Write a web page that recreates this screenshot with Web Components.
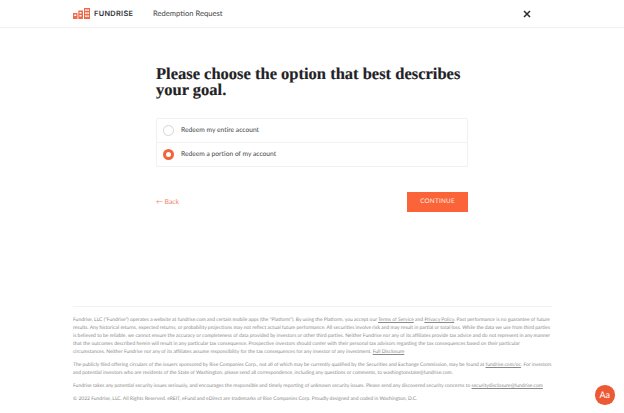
<!DOCTYPE html>
<html lang="en"><head><meta charset="utf-8"><title>Redemption Request</title>
<style>
html,body{margin:0;padding:0;background:#fff;}
body{font-family:"Lato","Noto Sans",sans-serif;color:#333;width:624px;height:413px;overflow:hidden;position:relative;text-rendering:geometricPrecision;}
</style></head>
<body>
<fr-header title-text="Redemption Request"></fr-header>
<fr-question>
  <span slot="title">Please choose the option that best describes your goal.</span>
  <fr-option>Redeem my entire account</fr-option>
  <fr-option checked>Redeem a portion of my account</fr-option>
</fr-question>
<fr-footer></fr-footer>
<fr-bubble></fr-bubble>
<script>
function def(name,html,init){customElements.define(name,class extends HTMLElement{constructor(){super();const r=this.attachShadow({mode:'open'});r.innerHTML=html;if(init)init(this,r);}});}
def('fr-header',`<style>
:host{display:flex;align-items:center;height:27px;border-bottom:1px solid #f1f1f1;padding-left:73px;box-sizing:content-box;}
svg{display:block}
.brand{font:600 7.400px/1 "Inter","Liberation Sans",sans-serif;letter-spacing:.3px;color:#2f3439;margin-left:4px;width:56px}
.t{font:400 7.600px/1 "Lato",sans-serif;color:#444;margin-left:3px;padding-top:1px}
.x{margin-left:auto;margin-right:93px;margin-top:1px}
</style>
<svg width="17" height="11" viewBox="0 0 17 11"><g fill="#ef6a4a"><path fill-rule="evenodd" d="M0 5h4.500v6H0zM1.200 6.500v1.400h2V6.500z"/><path fill-rule="evenodd" d="M5.300 2.500h4.700V11H5.300zM6.500 4v1.400h2V4zM6.500 7v1.400h2V7z"/><path fill-rule="evenodd" d="M11 0H17V11H11zM12.200 1.300v1.600h1.500V1.300zM14.400 1.300v1.600h1.400V1.300zM12.200 4.300v1.600h1.500V4.300zM14.400 4.300v1.600h1.400V4.300zM12.200 7.300v1.600h1.500V7.300zM14.400 7.300v1.600h1.400V7.300z"/></g></svg>
<span class="brand">FUNDRISE</span><span class="t">Redemption Request</span>
<svg class="x" width="8" height="8" viewBox="0 0 8 8"><path d="M1 1l6 6M7 1L1 7" stroke="#2b2b2b" stroke-width="1.500" fill="none"/></svg>`);
def('fr-question',`<style>
:host{display:block;width:312px;margin:0 auto 0 156px;padding-top:38px;}
h1{margin:0;font:700 16.500px/16px "Liberation Serif",serif;color:#1f2326;width:312px;-webkit-text-stroke:.15px #1f2326}
.card{margin-top:20px;border:1px solid #f0f0f0;border-radius:2px;}
.nav{display:flex;justify-content:space-between;align-items:center;margin-top:25px}
a{font:400 6.800px/1 "Lato",sans-serif;color:#ef8468;}
button{all:unset;width:61px;height:20px;background:#fb6338;color:#fde3da;font:500 6.300px/20px "Lato",sans-serif;letter-spacing:.25px;text-align:center;}
</style>
<h1><slot name="title"></slot></h1>
<div class="card"><slot></slot></div>
<div class="nav"><a>← Back</a><button>CONTINUE</button></div>`);
def('fr-option',`<style>
:host{display:flex;align-items:center;height:23px;font:400 6.700px/1 "Lato",sans-serif;color:#444;padding-left:6px;}
:host(:not(:last-child)){border-bottom:1px solid #f2f2f2;}
i{display:block;width:11px;height:11px;box-sizing:border-box;border-radius:50%;border:1px solid #d5d5d5;margin-right:7px;background:#fff;flex:none}
:host([checked]) i{border:3.500px solid #f2643a;}
</style><i></i><span><slot></slot></span>`);
def('fr-footer',`<style>
:host{display:block;position:absolute;left:73px;top:306px;width:479px;border-top:1px solid #f1f1f1;padding-top:10px;font:400 4.980px/7.950px "Lato",sans-serif;color:#8b8b8b;}
p{margin:0 0 5px;white-space:nowrap}
u{text-underline-offset:1px}
</style>
<p>Fundrise, LLC ("Fundrise") operates a website at fundrise.com and certain mobile apps (the "Platform"). By using the Platform, you accept our <u>Terms of Service</u> and <u>Privacy Policy</u>. Past performance is no guarantee of future<br>results. Any historical returns, expected returns, or probability projections may not reflect actual future performance. All securities involve risk and may result in partial or total loss. While the data we use from third parties<br>is believed to be reliable, we cannot ensure the accuracy or completeness of data provided by investors or other third parties. Neither Fundrise nor any of its affiliates provide tax advice and do not represent in any manner<br>that the outcomes described herein will result in any particular tax consequence. Prospective investors should confer with their personal tax advisors regarding the tax consequences based on their particular<br>circumstances. Neither Fundrise nor any of its affiliates assume responsibility for the tax consequences for any investor of any investment. <u>Full Disclosure</u></p>
<p>The publicly filed offering circulars of the issuers sponsored by Rise Companies Corp., not all of which may be currently qualified by the Securities and Exchange Commission, may be found at <u>fundrise.com/oc</u>. For investors<br>and potential investors who are residents of the State of Washington, please send all correspondence, including any questions or comments, to washingtonstate@fundrise.com.</p>
<p>Fundrise takes any potential security issues seriously, and encourages the responsible and timely reporting of unknown security issues. Please send any discovered security concerns to <u>securitydisclosure@fundrise.com</u></p>
<p>© 2022 Fundrise, LLC. All Rights Reserved. eREIT, eFund and eDirect are trademarks of Rise Companies Corp. Proudly designed and coded in Washington, D.C.</p>`);
def('fr-bubble',`<style>
:host{position:absolute;left:595px;top:385px;width:19.500px;height:19.500px;border-radius:50%;background:#ec5a35;color:#fff;display:flex;align-items:center;justify-content:center;font:400 9px/1 "Lato",sans-serif}
</style>Aa`);
</script>
</body></html>
